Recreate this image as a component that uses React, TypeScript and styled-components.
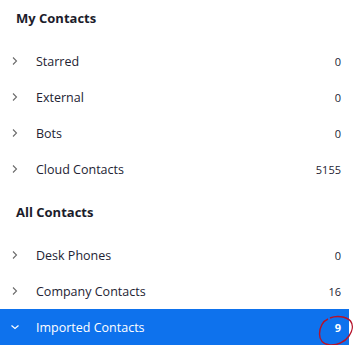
import styled, { createGlobalStyle } from "styled-components";

const GlobalStyle = createGlobalStyle`
  body {
    margin: 0;
    background: #ffffff;
    font-family: "Open Sans", "Noto Sans", sans-serif;
  }
`;

type Group = {
  title: string;
  items: { label: string; count: number; selected?: boolean }[];
};

const groups: Group[] = [
  {
    title: "My Contacts",
    items: [
      { label: "Starred", count: 0 },
      { label: "External", count: 0 },
      { label: "Bots", count: 0 },
      { label: "Cloud Contacts", count: 5155 },
    ],
  },
  {
    title: "All Contacts",
    items: [
      { label: "Desk Phones", count: 0 },
      { label: "Company Contacts", count: 16 },
      { label: "Imported Contacts", count: 9, selected: true },
    ],
  },
];

function Chevron({ open }: { open?: boolean }) {
  return (
    <svg width="10" height="10" viewBox="0 0 10 10" fill="none">
      {open ? (
        <path d="M1.5 3.5 L5 6.5 L8.5 3.5" stroke="#ffffff" strokeWidth="1.2" />
      ) : (
        <path d="M3 1.5 L6.5 5 L3 8.5" stroke="#6b6b6b" strokeWidth="1.1" />
      )}
    </svg>
  );
}

export default function App() {
  return (
    <>
      <GlobalStyle />
      <Panel>
        {groups.map((group, gi) => (
          <Section key={group.title} first={gi === 0}>
            <Heading>{group.title}</Heading>
            {group.items.map((item) => (
              <Row key={item.label} selected={item.selected}>
                <Arrow>
                  <Chevron open={item.selected} />
                </Arrow>
                <Label>{item.label}</Label>
                <Count selected={item.selected}>
                  {item.count}
                  {item.selected && (
                    // hand-drawn highlight around the count
                    <Mark width="36" height="32" viewBox="0 0 36 32">
                      <path
                        d="M12 3 C18 0.5 28 1 32.5 6 C35.5 10 34.5 16 31 21 C27 27 19 30.5 12 30 C5 29.5 1.5 25 1.5 19 C1.5 12 5 6 10 4"
                        stroke="#b5122b"
                        strokeWidth="1.4"
                        fill="none"
                      />
                    </Mark>
                  )}
                </Count>
              </Row>
            ))}
          </Section>
        ))}
      </Panel>
    </>
  );
}

const Panel = styled.div`
  width: 349px;
  display: flex;
  flex-direction: column;
`;

const Section = styled.div<{ first?: boolean }>`
  display: flex;
  flex-direction: column;
  margin-top: ${(p) => (p.first ? "0" : "7px")};
`;

const Heading = styled.div`
  height: 36px;
  line-height: 36px;
  margin-bottom: 7px;
  padding-left: 16px;
  font-size: 13px;
  font-weight: 700;
  color: #1c1c2b;
`;

const Row = styled.div<{ selected?: boolean }>`
  height: 36px;
  display: flex;
  align-items: center;
  padding: 0 8px 0 10px;
  background: ${(p) => (p.selected ? "#0e72ed" : "transparent")};
  color: ${(p) => (p.selected ? "#ffffff" : "#232333")};
`;

const Arrow = styled.span`
  width: 26px;
  display: flex;
  align-items: center;
`;

const Label = styled.span`
  flex: 1;
  font-size: 12.5px;
`;

const Count = styled.span<{ selected?: boolean }>`
  position: relative;
  font-size: 11px;
  line-height: 15px;
  color: ${(p) => (p.selected ? "#ffffff" : "#232333")};
  font-weight: ${(p) => (p.selected ? 700 : 400)};
`;

const Mark = styled.svg`
  position: absolute;
  right: -13px;
  top: -5px;
`;
